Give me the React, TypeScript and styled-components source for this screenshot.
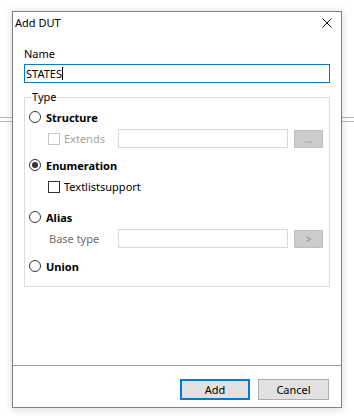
import styled, { createGlobalStyle } from "styled-components";

const GlobalStyle = createGlobalStyle`
    html, body {
        margin: 0;
        padding: 0;
        background: #fff;
    }
    body {
        font-family: "Noto Sans", "Open Sans", sans-serif;
        font-size: 11px;
        color: #000;
    }
`;

// the app behind the dialog: only its double rule shows at the sides
const Backdrop = styled.div`
    width: 354px;
    height: 416px;
    box-sizing: border-box;
    padding: 11px 0 0 12px;
    overflow: hidden;
    background-color: #fff;
    background-image: linear-gradient(#b9b9b9, #b9b9b9),
        linear-gradient(#b9b9b9, #b9b9b9);
    background-size: 100% 1px;
    background-repeat: no-repeat;
    background-position: 0 117px, 0 121px;
`;

const Window = styled.div`
    width: 330px;
    height: 397px;
    box-sizing: border-box;
    display: flex;
    flex-direction: column;
    background: #fff;
    border: 1px solid #7f7f7f;
    box-shadow: 0 1px 7px 1px rgba(0, 0, 0, 0.13);
`;

const TitleBar = styled.div`
    height: 22px;
    display: flex;
    align-items: center;
    justify-content: space-between;
    padding: 0 9px 0 2px;
`;

const Title = styled.span`
    font-size: 11px;
    line-height: 16px;
`;

const CloseIcon = () => (
    <svg width="10" height="10" viewBox="0 0 10 10">
        <path d="M0.5 0.5L9.5 9.5M9.5 0.5L0.5 9.5" stroke="#111" strokeWidth="1" />
    </svg>
);

const Body = styled.div`
    flex: 1;
    padding: 12px 11px 0 11px;
`;

const FieldLabel = styled.div`
    line-height: 16px;
`;

const NameInput = styled.div`
    margin-top: 2px;
    height: 19px;
    box-sizing: border-box;
    border: 1px solid #0078d7;
    padding-left: 1px;
    display: flex;
    align-items: center;
    line-height: 15px;
`;

const Caret = styled.span`
    display: inline-block;
    width: 1px;
    height: 13px;
    background: #000;
`;

const Group = styled.fieldset`
    margin: 6px 0 0;
    padding: 0 10px 10px 4px;
    border: 1px solid #dcdcdc;
    min-width: 0;
`;

const Legend = styled.legend`
    margin-left: 2px;
    padding: 0 1px;
    line-height: 16px;
`;

const OptionRow = styled.div<{ top: number }>`
    margin-top: ${({ top }) => top}px;
    height: 20px;
    display: flex;
    align-items: center;
    gap: 5px;
    font-weight: 700;
`;

const Radio = styled.span<{ checked?: boolean }>`
    width: 12px;
    height: 12px;
    flex-shrink: 0;
    box-sizing: border-box;
    border: 1px solid #333;
    border-radius: 50%;
    display: flex;
    align-items: center;
    justify-content: center;

    &::after {
        content: "";
        width: 6px;
        height: 6px;
        border-radius: 50%;
        background: ${({ checked }) => (checked ? "#333" : "transparent")};
    }
`;

const SubRow = styled.div<{ top: number }>`
    margin-top: ${({ top }) => top}px;
    margin-left: 19px;
    height: 19px;
    display: grid;
    grid-template-columns: 64px 170px 29px;
    column-gap: 6px;
    align-items: center;
`;

const CheckWrap = styled.div<{ wide?: boolean }>`
    grid-column: ${({ wide }) => (wide ? "1 / -1" : "auto")};
    display: flex;
    align-items: center;
    gap: 4px;
    white-space: nowrap;
`;

const Check = styled.span<{ disabled?: boolean }>`
    width: 12px;
    height: 12px;
    flex-shrink: 0;
    box-sizing: border-box;
    border: 1px solid ${({ disabled }) => (disabled ? "#c6c6c6" : "#333")};
    background: #fff;
`;

const MutedText = styled.span<{ tone: string; indent?: number }>`
    color: ${({ tone }) => tone};
    padding-left: ${({ indent }) => indent ?? 0}px;
    white-space: nowrap;
`;

const TextBox = styled.div`
    height: 19px;
    box-sizing: border-box;
    border: 1px solid #d9d9d9;
    background: #fff;
`;

const SmallButton = styled.div`
    height: 18px;
    box-sizing: border-box;
    border: 1px solid #bfbfbf;
    background: #cccccc;
    color: #8a8a8a;
    font-size: 10px;
    display: flex;
    align-items: center;
    justify-content: center;
`;

const Footer = styled.div`
    height: 42px;
    box-sizing: border-box;
    border-top: 1px solid #a0a0a0;
    display: flex;
    justify-content: flex-end;
    align-items: flex-start;
    gap: 8px;
    padding: 13px 12px 0 0;
`;

const Button = styled.button<{ primary?: boolean }>`
    width: ${({ primary }) => (primary ? 70 : 71)}px;
    height: 21px;
    box-sizing: border-box;
    margin: 0;
    padding: 0;
    font-family: inherit;
    font-size: 11px;
    color: #000;
    background: #e1e1e1;
    border: ${({ primary }) =>
        primary ? "2px solid #0078d7" : "1px solid #adadad"};
`;

export default function App() {
    return (
        <>
            <GlobalStyle />
            <Backdrop>
                <Window>
                    <TitleBar>
                        <Title>Add DUT</Title>
                        <CloseIcon />
                    </TitleBar>
                    <Body>
                        <FieldLabel>Name</FieldLabel>
                        <NameInput>
                            STATES
                            <Caret />
                        </NameInput>
                        <Group>
                            <Legend>Type</Legend>
                            <OptionRow top={2}>
                                <Radio />
                                Structure
                            </OptionRow>
                            <SubRow top={2}>
                                <CheckWrap>
                                    <Check disabled />
                                    <MutedText tone="#a3a3a3">Extends</MutedText>
                                </CheckWrap>
                                <TextBox />
                                <SmallButton>...</SmallButton>
                            </SubRow>
                            <OptionRow top={7}>
                                <Radio checked />
                                Enumeration
                            </OptionRow>
                            <SubRow top={2}>
                                <CheckWrap wide>
                                    <Check />
                                    <span>Textlistsupport</span>
                                </CheckWrap>
                            </SubRow>
                            <OptionRow top={11}>
                                <Radio />
                                Alias
                            </OptionRow>
                            <SubRow top={2}>
                                <MutedText tone="#6d6d6d" indent={1}>
                                    Base type
                                </MutedText>
                                <TextBox />
                                <SmallButton>&gt;</SmallButton>
                            </SubRow>
                            <OptionRow top={8}>
                                <Radio />
                                Union
                            </OptionRow>
                        </Group>
                    </Body>
                    <Footer>
                        <Button primary>Add</Button>
                        <Button>Cancel</Button>
                    </Footer>
                </Window>
            </Backdrop>
        </>
    );
}
